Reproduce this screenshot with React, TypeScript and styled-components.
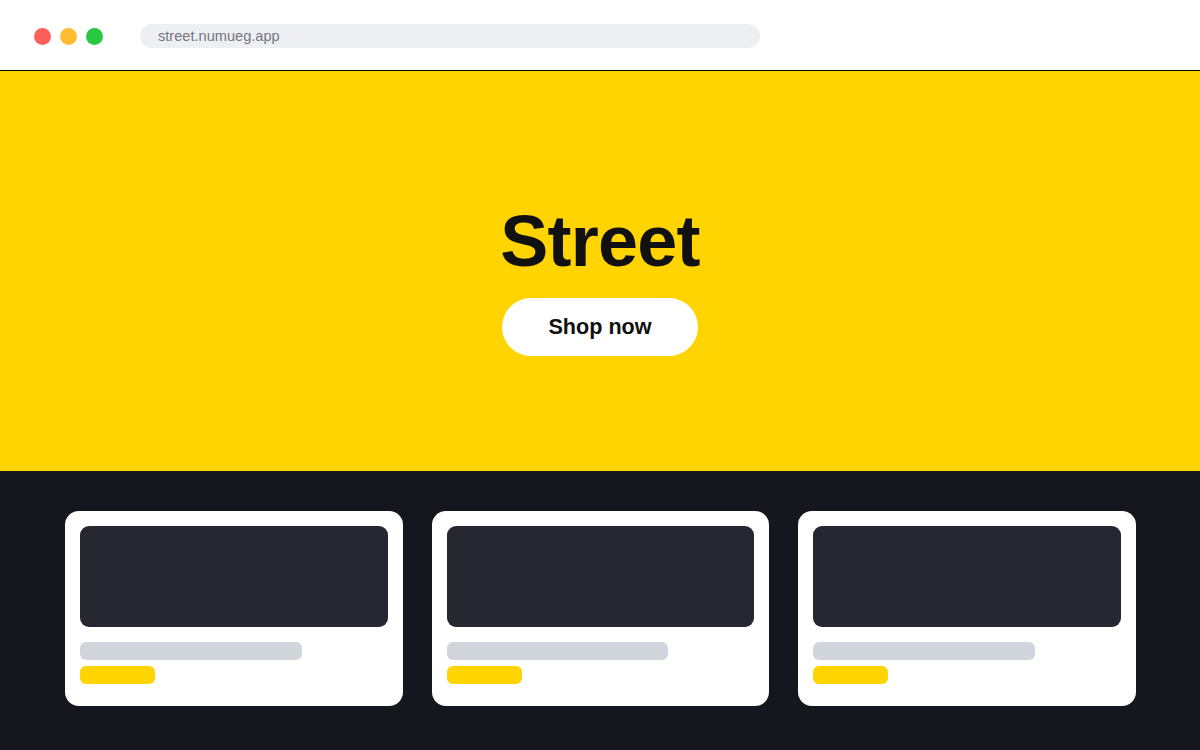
import styled, { createGlobalStyle } from "styled-components";

const GlobalStyle = createGlobalStyle`
  html, body {
    margin: 0;
    padding: 0;
    background: #16161f;
  }
  body {
    font-family: "Liberation Sans", Arial, sans-serif;
  }
  * {
    box-sizing: border-box;
  }
`;

const Page = styled.div`
  width: 1200px;
  height: 750px;
  overflow: hidden;
  display: flex;
  flex-direction: column;
`;

const TopBar = styled.div`
  height: 71px;
  background: #ffffff;
  border-bottom: 1px solid #000000;
  display: flex;
  align-items: center;
  padding: 2px 0 0 34px;
`;

const Dots = styled.div`
  display: flex;
  gap: 9px;
  margin-right: 37px;
`;

const Dot = styled.span<{ $color: string }>`
  width: 17px;
  height: 17px;
  border-radius: 50%;
  background: ${(p) => p.$color};
`;

const Address = styled.div`
  width: 620px;
  height: 24px;
  border-radius: 12px;
  background: #eeeff3;
  color: #737680;
  font-size: 14.6px;
  line-height: 24px;
  padding-left: 18px;
`;

const Hero = styled.section`
  height: 400px;
  background: #ffd400;
  display: flex;
  flex-direction: column;
  align-items: center;
  padding-top: 134px;
`;

const Title = styled.h1`
  margin: 0;
  font-size: 72px;
  line-height: 1;
  font-weight: 700;
  letter-spacing: -0.8px;
  color: #111111;
`;

const ShopButton = styled.button`
  margin-top: 21px;
  border: none;
  border-radius: 999px;
  background: #ffffff;
  color: #111111;
  font-family: "Liberation Sans", Arial, sans-serif;
  font-size: 21.6px;
  font-weight: 700;
  padding: 16px 46px;
  cursor: pointer;
`;

const Products = styled.section`
  flex: 1;
  background: #16161f;
  display: grid;
  grid-template-columns: repeat(3, 1fr);
  gap: 29px;
  padding: 40px 64px 0 65px;
  align-items: start;
`;

const Card = styled.div`
  background: #ffffff;
  border-radius: 14px;
  padding: 15px 15px 22px;
  display: flex;
  flex-direction: column;
`;

const Thumb = styled.div`
  height: 101px;
  border-radius: 9px;
  background: #272731;
  margin-bottom: 15px;
`;

const Bar = styled.div<{ $width: string; $color: string }>`
  width: ${(p) => p.$width};
  height: 18px;
  border-radius: 6px;
  background: ${(p) => p.$color};
  & + & {
    margin-top: 6px;
  }
`;

function ProductCard() {
  return (
    <Card>
      <Thumb />
      <Bar $width="72%" $color="#d1d5dc" />
      <Bar $width="75px" $color="#ffd400" />
    </Card>
  );
}

export default function App() {
  return (
    <Page>
      <GlobalStyle />
      <TopBar>
        <Dots>
          <Dot $color="#ff5f57" />
          <Dot $color="#febc2e" />
          <Dot $color="#28c840" />
        </Dots>
        <Address>street.numueg.app</Address>
      </TopBar>
      <Hero>
        <Title>Street</Title>
        <ShopButton>Shop now</ShopButton>
      </Hero>
      <Products>
        <ProductCard />
        <ProductCard />
        <ProductCard />
      </Products>
    </Page>
  );
}
